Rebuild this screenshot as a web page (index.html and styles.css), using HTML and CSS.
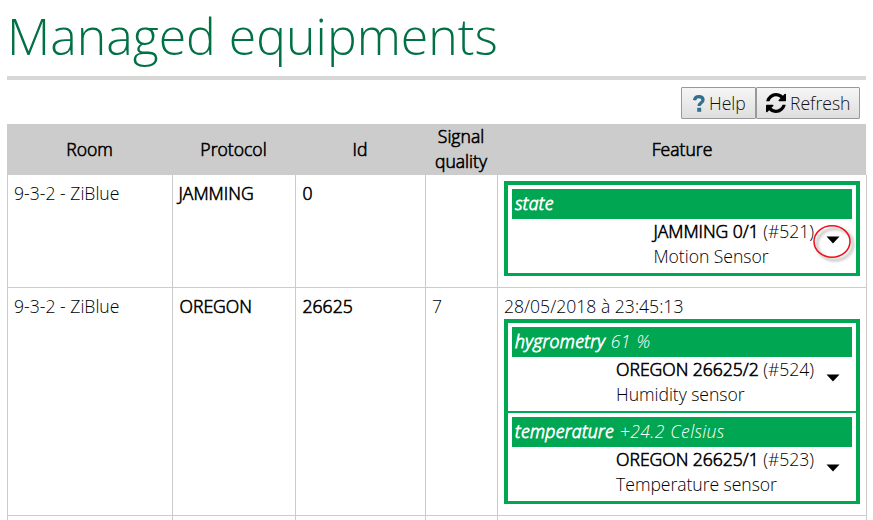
FILE: index.html
```html
<!DOCTYPE html>
<html lang="en">
<head>
<meta charset="utf-8">
<title>Managed equipments</title>
<link rel="stylesheet" href="styles.css">
</head>
<body>
<h1>Managed equipments</h1>
<div class="toolbar">
  <button class="btn help"><svg class="question" viewBox="0 0 12 17"><path d="M1.5 5.2C2 2.7 3.6 1.7 5.8 1.7C8.3 1.7 10 3 10 5C10 8 6.2 7.500 6.2 10.900" fill="none" stroke="#31708f" stroke-width="3.3"/><rect x="4.2" y="12.8" width="4" height="4" fill="#31708f"/></svg><span>Help</span></button>
  <button class="btn refresh"><svg class="sync" viewBox="0 0 1536 1536"><path d="M1511 928q0 5-1 7-64 268-268 434.500T764 1536q-146 0-282.500-55T238 1324l-129 129q-19 19-45 19t-45-19-19-45V960q0-26 19-45t45-19h448q26 0 45 19t19 45-19 45l-137 137q71 66 161 102t187 36q134 0 250-65t186-179q11-17 53-117 8-23 30-23h192q13 0 22.500 9.500t9.500 22.500zm25-800v448q0 26-19 45t-45 19h-448q-26 0-45-19t-19-45 19-45l138-138Q969 256 768 256q-134 0-250 65T332 500q-11 17-53 117-8 23-30 23H50q-13 0-22.500-9.500T18 608v-7q65-268 270-434.500T768 0q146 0 284 55.500T1297 212l130-129q19-19 45-19t45 19 19 45z"/></svg><span>Refresh</span></button>
</div>
<div class="table">
  <div class="row head">
    <div>Room</div><div>Protocol</div><div>Id</div><div>Signal<br>quality</div><div>Feature</div>
  </div>
  <div class="row first">
    <div>9-3-2 - ZiBlue</div>
    <div class="strong jamming">JAMMING</div>
    <div class="strong">0</div>
    <div></div>
    <div>
      <div class="card">
        <div class="feature">
          <div class="band"><b>state</b></div>
          <div class="info">
            <div class="device"><b>JAMMING 0/1</b> (#521)<br>Motion Sensor</div>
            <div class="menu"><svg class="caret" viewBox="0 0 14 8"><path d="M0.5 0.5H13.5L7 7.5Z"/></svg><svg class="ring" viewBox="0 0 38 33"><ellipse cx="19" cy="16.5" rx="18" ry="15.7"/></svg></div>
          </div>
        </div>
      </div>
    </div>
  </div>
  <div class="row second">
    <div>9-3-2 - ZiBlue</div>
    <div class="strong">OREGON</div>
    <div class="strong">26625</div>
    <div>7</div>
    <div>
      <div class="date">28/05/2018 à 23:45:13</div>
      <div class="card">
        <div class="feature">
          <div class="band"><b>hygrometry</b> 61 %</div>
          <div class="info">
            <div class="device"><b>OREGON 26625/2</b> (#524)<br>Humidity sensor</div>
            <div class="menu"><svg class="caret" viewBox="0 0 14 8"><path d="M0.5 0.5H13.5L7 7.5Z"/></svg></div>
          </div>
        </div>
        <div class="feature">
          <div class="band"><b>temperature</b> +24.2 Celsius</div>
          <div class="info">
            <div class="device"><b>OREGON 26625/1</b> (#523)<br>Temperature sensor</div>
            <div class="menu"><svg class="caret" viewBox="0 0 14 8"><path d="M0.5 0.5H13.5L7 7.5Z"/></svg></div>
          </div>
        </div>
      </div>
    </div>
  </div>
  <div class="row last"><div></div><div></div><div></div><div></div><div></div></div>
</div>
</body>
</html>
```
FILE: styles.css
```css
* { box-sizing: border-box; }
html { overflow: hidden; }
body {
  margin: 0;
  padding: 0 6px 0 7px;
  height: 520px;
  overflow: hidden;
  background: #fff;
  color: #000;
  font: 300 17.6px/25px "Open Sans", sans-serif;
}
h1 {
  margin: 0;
  height: 80px;
  width: 859px;
  border-bottom: 4px solid #d7d7d5;
  color: #007145;
  font-size: 50px;
  font-weight: 300;
  line-height: 72px;
  white-space: nowrap;
}
.toolbar {
  display: flex;
  justify-content: flex-end;
  height: 44px;
  padding: 7px 7px 0 0;
}
.btn {
  display: flex;
  align-items: center;
  height: 32px;
  padding: 0;
  border: 1px solid #999;
  border-radius: 1px;
  background: linear-gradient(#f6f6f6, #dedede);
  color: #111;
  font: inherit;
  white-space: nowrap;
}
.help { width: 75px; padding-left: 11px; gap: 4px; }
.refresh { width: 104px; padding-left: 9px; gap: 4px; }
.question { width: 12px; height: 17px; }
.sync { width: 20px; height: 20px; }
.table { width: 860px; }
.row {
  display: grid;
  grid-template-columns: 165px 123px 130px 72px 370px;
}
.row > div {
  padding: 6px 6px 0;
  border-left: 1px solid #ccc;
  border-bottom: 1px solid #ccc;
}
.row > div:last-child { border-right: 1px solid #ccc; }
.head { height: 51px; width: 859px; background: #ccc; }
.row.head > div {
  display: flex;
  align-items: center;
  justify-content: center;
  padding: 0 0 2px;
  border: 0;
  text-align: center;
}
.head, .strong, b {
  font-weight: 300;
  color: #000;
  -webkit-text-stroke: 0.6px currentColor;
}
.row > .strong { padding-left: 6.500px; }
.first { height: 113px; }
.second { height: 228px; }
.last { height: 20px; }
.row > .jamming { padding-left: 5.500px; }
.card {
  width: 356px;
  border: 4px solid #00a651;
  border-bottom-width: 3px;
}
.feature { padding: 4px 4px 0; height: 88px; }
.feature + .feature { border-top: 2px solid #00a651; height: 90px; }
.band {
  height: 30px;
  padding-left: 3px;
  background: #00a651;
  color: #fff;
  font-style: italic;
  letter-spacing: 0.34px;
  word-spacing: 0.8px;
  line-height: 28px;
}
.band b { color: #fff; -webkit-text-stroke-width: 0.8px; }
.info { display: flex; justify-content: flex-end; }
.device { white-space: nowrap; letter-spacing: -0.05px; }
.menu {
  position: relative;
  width: 26px;
  margin-left: 12px;
}
.caret { display: block; width: 14px; height: 8px; margin-top: 17px; }
.ring {
  position: absolute;
  left: -13px;
  top: 6px;
  width: 38px;
  height: 33px;
  overflow: visible;
  fill: none;
  stroke: #f01018;
  stroke-width: 1.5px;
  filter: drop-shadow(3px 3px 1.5px rgba(0, 0, 0, .4));
}
.date { height: 25px; }
```
